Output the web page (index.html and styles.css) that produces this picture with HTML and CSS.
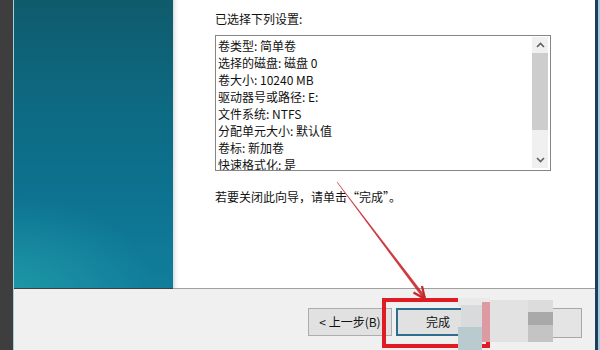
FILE: index.html
```html
<!DOCTYPE html>
<html lang="zh-CN">
<head>
<meta charset="utf-8">
<title>新建简单卷向导</title>
<link rel="stylesheet" href="styles.css">
</head>
<body>
<div class="strip"></div>
<div class="edge"></div>
<div class="window">
  <div class="top">
    <div class="banner"></div>
    <div class="content">
      <div class="heading">已选择下列设置:</div>
      <div class="listbox">
        <div class="items">
          <div>卷类型: 简单卷</div>
          <div>选择的磁盘: 磁盘 0</div>
          <div>卷大小: 10240 MB</div>
          <div>驱动器号或路径: E:</div>
          <div>文件系统: NTFS</div>
          <div>分配单元大小: 默认值</div>
          <div>卷标: 新加卷</div>
          <div>快速格式化: 是</div>
        </div>
        <div class="scrollbar">
          <div class="sb-btn"><svg width="9" height="6" viewBox="0 0 9 6"><path d="M1 5 L4.5 1.5 L8 5" fill="none" stroke="#606060" stroke-width="1.6"/></svg></div>
          <div class="sb-thumb"></div>
          <div class="sb-track"></div>
          <div class="sb-btn"><svg width="9" height="6" viewBox="0 0 9 6"><path d="M1 1 L4.5 4.5 L8 1" fill="none" stroke="#606060" stroke-width="1.6"/></svg></div>
        </div>
      </div>
      <div class="closing">若要关闭此向导，请单击“完成”。</div>
    </div>
  </div>
  <div class="footer">
    <div class="btn">&lt; 上一步(B)</div>
    <div class="btn btn-default">完成</div>
    <div class="btn btn-cancel">取消</div>
  </div>
</div>
<div class="rborder"></div>

<div class="redbox"></div>
<div class="mosaic">
  <div class="m m1"></div>
  <div class="m m2"></div>
  <div class="m m3"></div>
  <div class="m m4"></div>
  <div class="m m5"></div>
  <div class="m m6"></div>
  <div class="m m7"></div>
  <div class="m m8"></div>
  <div class="m m9"></div>
</div>
<svg class="arrow" width="600" height="350" viewBox="0 0 600 350">
  <polygon points="337.2,181.8 336.8,182.2 423.2,298.8 425.8,296.8" fill="#c9262b" opacity="0.9"/>
  <polyline points="413.5,292.5 425,299 422,286" fill="none" stroke="#c9262b" stroke-width="2.2" stroke-linejoin="miter"/>
</svg>
</body>
</html>
```

FILE: styles.css
```css
html, body {
  margin: 0;
  padding: 0;
}
body {
  width: 600px;
  height: 350px;
  overflow: hidden;
  display: flex;
  position: relative;
  background: #3f3f3f;
  font-family: "Noto Sans CJK SC", "Noto Sans", sans-serif;
  font-size: 12px;
  color: #111;
}
.strip {
  width: 13px;
  background: #3e3e3e;
}
.edge {
  width: 1px;
  background: #a6cfdc;
}
.window {
  width: 581px;
  display: flex;
  flex-direction: column;
}
.top {
  height: 289px;
  display: flex;
}
.banner {
  width: 159px;
  height: 288px;
  background:
    radial-gradient(ellipse 140px 90px at 0% 100%, rgba(40, 170, 175, 0.55), rgba(40, 170, 175, 0) 100%),
    linear-gradient(to bottom, #0f5b6c 0%, #0d6a83 38%, #0d7391 70%, #117e9c 100%);
}
.content {
  flex: 1;
  background: linear-gradient(to right, #dcdcdc 0px, #f6f6f6 3px, #ffffff 6px);
  border-bottom: 1px solid #a0a0a0;
  padding: 11px 0 0 42px;
}
.heading {
  line-height: 16px;
  height: 16px;
}
.listbox {
  margin-top: 8px;
  width: 334px;
  height: 134px;
  border: 1px solid #858585;
  background: #fff;
  display: flex;
  overflow: hidden;
}
.items {
  flex: 1;
  padding: 1px 0 0 2px;
  line-height: 17px;
  overflow: hidden;
}
.scrollbar {
  width: 16px;
  margin: 1px 2px 2px 0;
  display: flex;
  flex-direction: column;
  background: #f0f0f0;
}
.sb-btn {
  height: 16px;
  display: flex;
  align-items: center;
  justify-content: center;
}
.sb-thumb {
  height: 77px;
  background: #cdcdcd;
}
.sb-track {
  flex: 1;
}
.closing {
  margin-top: 18px;
  line-height: 16px;
}
.footer {
  flex: 1;
  background: #f0f0f0;
  display: flex;
  justify-content: flex-end;
  align-items: flex-start;
  padding: 19px 14px 0 0;
  gap: 4px;
}
.btn {
  width: 82px;
  height: 26px;
  border: 1px solid #adadad;
  background: #e1e1e1;
  display: flex;
  align-items: center;
  justify-content: center;
  line-height: 16px;
}
.btn-default {
  width: 80px;
  height: 24px;
  border: 2px solid #2c6e8d;
}
.btn-cancel {
  margin-left: 13px;
}
.rborder {
  width: 3px;
  background: #1d3e5a;
  border-right: 2px solid #a4cbe0;
}
.redbox {
  position: absolute;
  left: 382px;
  top: 298px;
  width: 100px;
  height: 42px;
  border: 4px solid #e11b24;
}
.mosaic {
  position: absolute;
  left: 458px;
  top: 296px;
  width: 124px;
  height: 54px;
}
.m {
  position: absolute;
}
.m1 { left: 0; top: 2px; width: 32px; height: 9px; background: #e9e9e9; }
.m2 { left: 3px; top: 9px; width: 22px; height: 22px; background: #d9dadb; }
.m3 { left: 0; top: 31px; width: 24px; height: 23px; background: #b9cbcf; }
.m4 { left: 24px; top: 6px; width: 8px; height: 40px; background: #dd9aa3; }
.m5 { left: 32px; top: 4px; width: 38px; height: 42px; background: #e2e2e2; }
.m6 { left: 70px; top: 4px; width: 25px; height: 12px; background: #dcdcdc; }
.m7 { left: 70px; top: 16px; width: 25px; height: 13px; background: #a9a9a9; }
.m8 { left: 70px; top: 29px; width: 25px; height: 17px; background: #c4c4c4; }
.m9 { left: 95px; top: 12px; width: 28px; height: 28px; background: #e4e4e4; border: 1px solid #a8a8a8; border-left: none; }
.arrow {
  position: absolute;
  left: 0;
  top: 0;
  pointer-events: none;
}
```
